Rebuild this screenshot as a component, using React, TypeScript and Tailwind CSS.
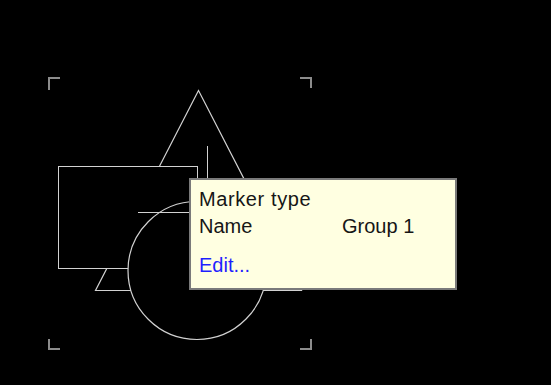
import React from "react";

export default function App() {
  const stroke = "#d2d2d2";
  const bracket = "#8c8c8c";
  return (
    <div className="relative w-[551px] h-[385px] bg-black overflow-hidden">
      <svg width="551" height="385" className="absolute left-0 top-0" shapeRendering="crispEdges">
        {/* selection brackets */}
        <g stroke={bracket} strokeWidth="2" fill="none">
          <path d="M49 90 V78 H60" />
          <path d="M300 78 H311 V88" />
          <path d="M49 339 V349 H60" />
          <path d="M300 349 H311 V339" />
        </g>
        {/* triangle */}
        <polygon points="198.5,90.5 95.5,290.5 301.5,290.5" fill="black" stroke={stroke} strokeWidth="1.2" shapeRendering="auto" />
        {/* rectangle */}
        <rect x="58.5" y="166.5" width="139" height="102" fill="black" stroke={stroke} strokeWidth="1" />
        {/* circle */}
        <circle cx="197" cy="270.5" r="69" fill="black" stroke={stroke} strokeWidth="1.2" shapeRendering="auto" />
        {/* crosshair */}
        <g stroke={stroke} strokeWidth="1">
          <line x1="138" y1="212.5" x2="276" y2="212.5" />
          <line x1="207.5" y1="146" x2="207.5" y2="280" />
        </g>
      </svg>

      <div
        className="absolute left-[189px] top-[178px] w-[268px] h-[112px] bg-[#ffffe1] border-2 border-[#7a7a7a] text-[#161616] text-[20px] leading-none"
        style={{ fontFamily: '"Liberation Sans", Arial, sans-serif' }}
      >
        <div className="pl-[8px] pt-[9px] flex flex-col">
          <div className="h-[27px] flex items-start tracking-[0.6px]">Marker type</div>
          <div className="h-[27px] flex items-start">
            <span className="w-[143px]">Name</span>
            <span>Group 1</span>
          </div>
          <div className="mt-[12px] text-[#1f1fff]">Edit...</div>
        </div>
      </div>
    </div>
  );
}
